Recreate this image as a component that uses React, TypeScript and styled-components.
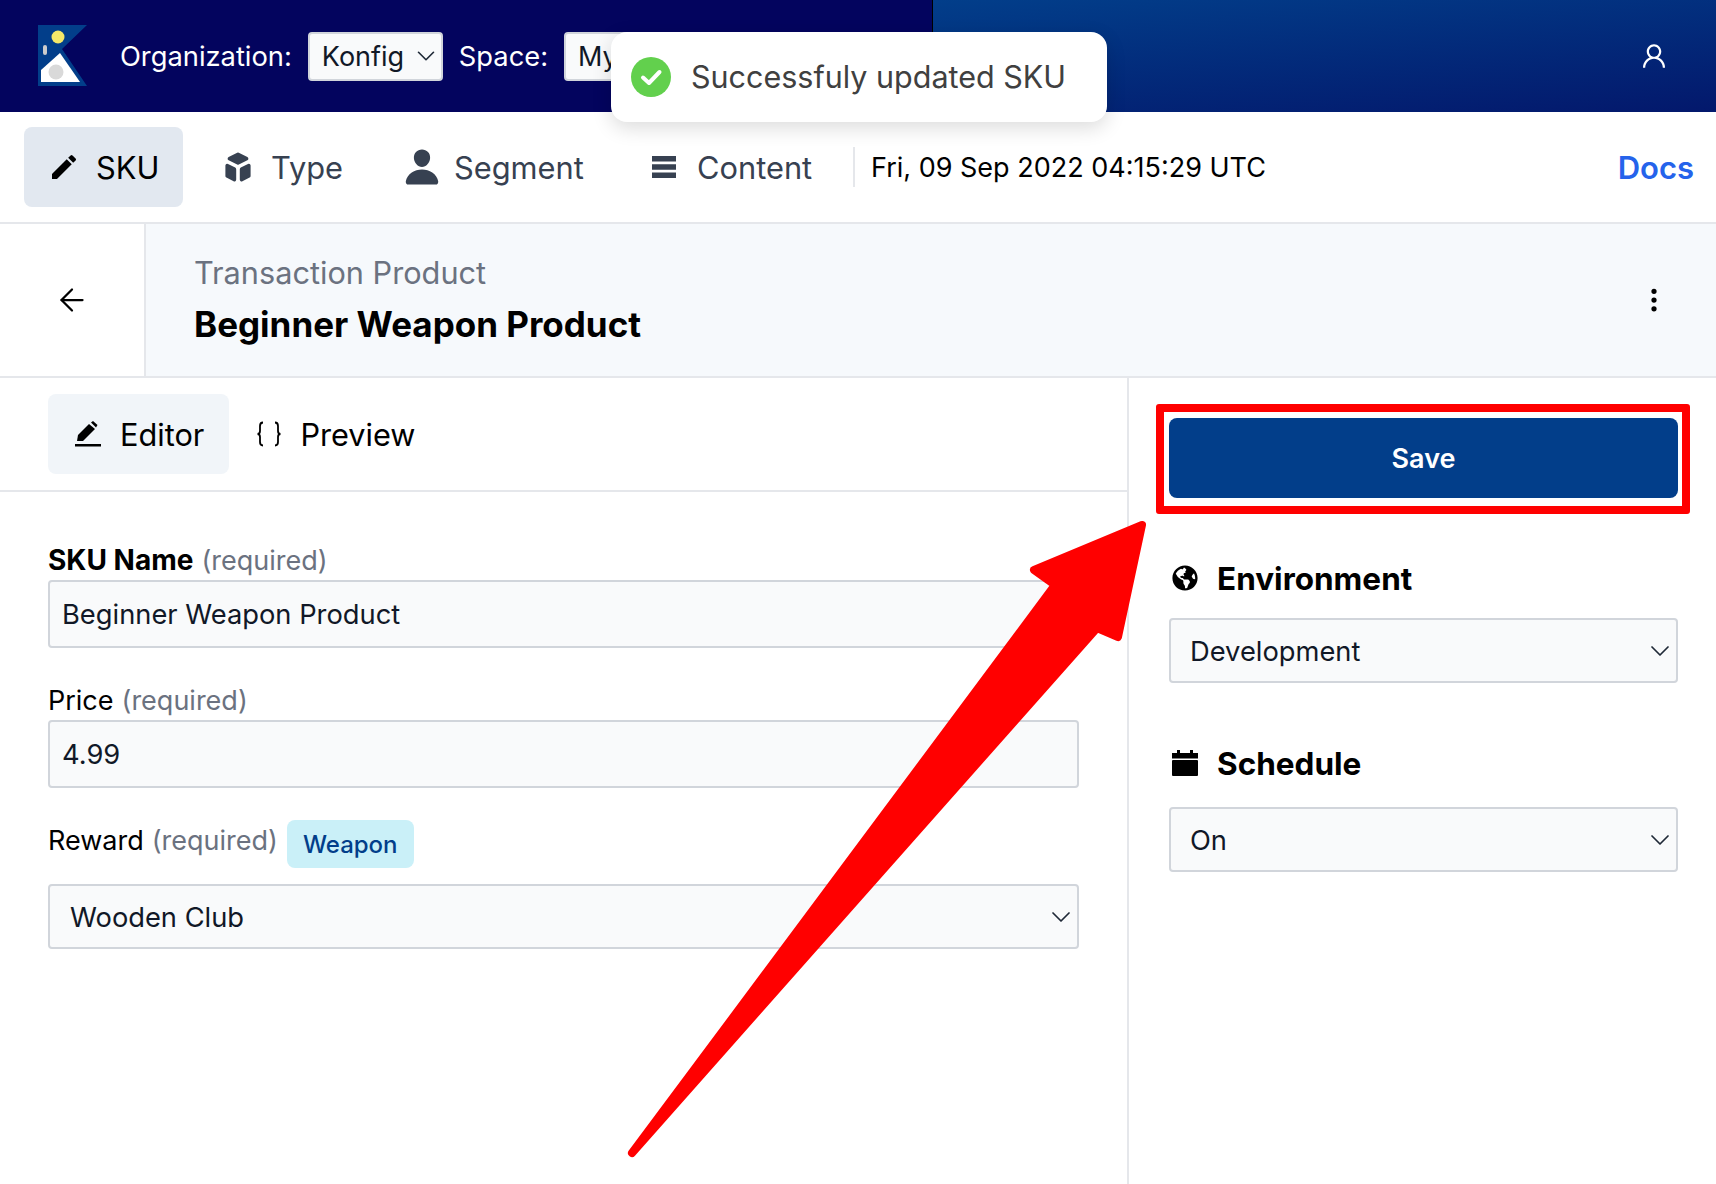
import React from "react";
import styled, { createGlobalStyle } from "styled-components";
import { MdEdit } from "react-icons/md";
import { HiCube } from "react-icons/hi";
import { IoPerson } from "react-icons/io5";
import { AiOutlineUser } from "react-icons/ai";
import { BsThreeDotsVertical } from "react-icons/bs";
import { FaGlobeAmericas } from "react-icons/fa";
import { ArrowLeft, ChevronDown } from "lucide-react";

const GlobalStyle = createGlobalStyle`
  html, body { margin: 0; padding: 0; background: #fff; }
  body { font-family: Inter, "Liberation Sans", sans-serif; font-size: 24px; color: #000; overflow: hidden; }
  * { box-sizing: border-box; }
`;

const Page = styled.div`
  position: relative;
  width: 1716px;
  height: 1184px;
  overflow: hidden;
`;

const Header = styled.header`
  display: flex;
  height: 112px;
`;

const HeaderLeft = styled.div`
  width: 933px;
  display: flex;
  align-items: center;
  padding-left: 38px;
  background: #03045e;
  border-right: 1px solid #000;
  color: #fff;
`;

const HeaderRight = styled.div`
  flex: 1;
  display: flex;
  align-items: center;
  justify-content: flex-end;
  padding-right: 47px;
  color: #fff;
  font-size: 30px;
  background: linear-gradient(175deg, #023e8a 0%, #03186c 100%);
`;

const Logo = styled.svg`
  width: 49px;
  height: 61px;
  margin-right: 33px;
  margin-top: -1px;
`;

const HeaderLabel = styled.span`
  font-size: 27.3px;
  margin-right: 16px;
`;

const HeaderSelect = styled.div<{ $width: number }>`
  width: ${(p) => p.$width}px;
  height: 49px;
  margin-right: 16px;
  padding: 0 0 0 12px;
  display: flex;
  align-items: center;
  justify-content: space-between;
  flex-shrink: 0;
  background: #f9fafb;
  border: 2px solid #d1d5db;
  border-radius: 4px;
  color: #111827;
  font-size: 27px;
`;

const Toast = styled.div`
  position: absolute;
  left: 611px;
  top: 32px;
  width: 496px;
  height: 90px;
  padding-left: 20px;
  display: flex;
  align-items: center;
  gap: 20px;
  background: #fff;
  border-radius: 16px;
  box-shadow: 0 6px 20px rgba(0, 0, 0, 0.14);
  color: #404040;
  font-size: 30.5px;
  z-index: 2;
`;

const ToastText = styled.span`
  margin-top: -2px;
`;

const NavBar = styled.nav`
  height: 112px;
  padding: 15px 22px 0 24px;
  display: flex;
  align-items: flex-start;
  border-bottom: 2px solid #e5e7eb;
`;

const NavItem = styled.div<{ $active?: boolean; $width: number; $pad: number }>`
  width: ${(p) => p.$width}px;
  height: 80px;
  padding-left: ${(p) => p.$pad}px;
  display: flex;
  align-items: center;
  flex-shrink: 0;
  background: ${(p) => (p.$active ? "#e2e8f0" : "transparent")};
  border-radius: 8px;
  color: ${(p) => (p.$active ? "#000" : "#374151")};
  font-size: 30.8px;
`;

const NavIcon = styled.span<{ $gap: number; $size: number }>`
  display: flex;
  margin-right: ${(p) => p.$gap}px;
  font-size: ${(p) => p.$size}px;
`;

const Bars = styled.svg`
  width: 24px;
  height: 22px;
`;

const NavDate = styled.div`
  height: 40px;
  margin-top: 20px;
  padding-left: 16px;
  display: flex;
  align-items: center;
  border-left: 2px solid #e5e7eb;
  font-size: 27px;
`;

const DocsLink = styled.a`
  margin: 22px 0 0 auto;
  color: #2563eb;
  font-size: 31px;
  font-weight: 600;
`;

const TitleBar = styled.div`
  height: 154px;
  display: flex;
  border-bottom: 2px solid #e5e7eb;
`;

const BackCell = styled.div`
  width: 146px;
  display: flex;
  align-items: center;
  justify-content: center;
  border-right: 2px solid #e5e7eb;
`;

const TitleCell = styled.div`
  flex: 1;
  display: flex;
  align-items: center;
  justify-content: space-between;
  padding: 0 48px 0 48px;
  background: #f6f9fc;
`;

const TitleKind = styled.div`
  color: #6b7280;
  font-size: 30.7px;
  line-height: 36px;
  margin-bottom: 12px;
`;

const TitleName = styled.div`
  font-size: 35px;
  font-weight: 700;
  line-height: 42px;
`;

const Body = styled.div`
  height: 808px;
  display: flex;
`;

const Editor = styled.main`
  width: 1129px;
  border-right: 2px solid #e5e7eb;
`;

const TabRow = styled.div`
  height: 114px;
  padding: 16px 48px 0;
  display: flex;
  align-items: flex-start;
  border-bottom: 2px solid #e5e7eb;
`;

const Tab = styled.div<{ $active?: boolean; $pad: number; $right: number }>`
  height: 80px;
  padding: 0 ${(p) => p.$right}px 0 ${(p) => p.$pad}px;
  display: flex;
  align-items: center;
  gap: 18px;
  flex-shrink: 0;
  background: ${(p) => (p.$active ? "#f1f5f9" : "transparent")};
  border-radius: 8px;
  font-size: 30.7px;

  svg {
    flex-shrink: 0;
  }
`;

const Form = styled.div`
  padding: 52px 48px 0 48px;
`;

const FieldLabel = styled.div`
  height: 36px;
  padding-bottom: 4px;
  display: flex;
  align-items: center;
  font-size: 27px;
`;

const FieldName = styled.strong`
  font-size: 28px;
  font-weight: 700;
`;

const Required = styled.span`
  margin-left: 8px;
  color: #6b7280;
  font-size: 27px;
  font-weight: 400;
`;

const Input = styled.div`
  height: 68px;
  margin-bottom: 36px;
  padding: 0 12px;
  display: flex;
  align-items: center;
  background: #f9fafb;
  border: 2px solid #d1d5db;
  border-radius: 4px;
  color: #111827;
  font-size: 27.3px;
`;

const Badge = styled.span`
  margin: 0 0 -8px 9px;
  padding: 0 16px;
  height: 48px;
  display: flex;
  align-items: center;
  background: #caf0f8;
  border-radius: 8px;
  color: #023e8a;
  font-size: 24px;
  font-weight: 500;
`;

const RewardLabel = styled(FieldLabel)`
  height: 48px;
  margin: -4px 0 16px;
  padding-bottom: 8px;
`;

const SelectBox = styled.div<{ $pad: number }>`
  height: 65px;
  padding: 0 0 0 ${(p) => p.$pad}px;
  display: flex;
  align-items: center;
  justify-content: space-between;
  background: #f9fafb;
  border: 2px solid #d1d5db;
  border-radius: 4px;
  color: #111827;
  font-size: 27.3px;
`;

const SelectValue = styled.span`
  margin-top: 2px;
`;

const Side = styled.aside`
  flex: 1;
  padding: 40px 38px 0 40px;
`;

const SaveButton = styled.button`
  display: block;
  width: 100%;
  height: 80px;
  margin-bottom: 60px;
  background: #023e8a;
  border: 0;
  border-radius: 8px;
  color: #fff;
  font-family: inherit;
  font-size: 27px;
  font-weight: 600;
`;

const SaveHighlight = styled.div`
  position: absolute;
  left: 1156px;
  top: 404px;
  width: 534px;
  height: 110px;
  border: 8px solid #ff0000;
  border-radius: 3px;
`;

const SideHeading = styled.div<{ $gap: number }>`
  height: 40px;
  margin-bottom: ${(p) => p.$gap}px;
  display: flex;
  align-items: center;
  gap: 19px;
  font-size: 31.5px;
  font-weight: 700;
`;

const SideIcon = styled.span`
  display: flex;
  margin-left: 3px;
  font-size: 26px;
`;

const SideGroup = styled.div`
  margin-bottom: 60px;
`;

const ArrowOverlay = styled.svg`
  position: absolute;
  left: 0;
  top: 0;
  width: 1716px;
  height: 1184px;
  pointer-events: none;
`;

const Chevron = ({ size = 32, weight = 1.3 }: { size?: number; weight?: number }) => (
  <ChevronDown size={size} strokeWidth={weight} color="#1f2937" />
);

const PenLine = () => (
  <svg width="28" height="28" viewBox="0 0 28 28" fill="currentColor">
    <path d="M3 21 L4 15 L15 4 L21 9 L10 20 L9 21 Z" />
    <path d="M17 2.5 L19 1 L23.5 5 L22 7.5 Z" />
    <rect x="1" y="24" width="26" height="2.5" />
  </svg>
);

const CurlyBraces = () => (
  <svg width="26" height="26" viewBox="0 0 26 26" fill="none" stroke="currentColor" strokeWidth="1.8">
    <path d="M7 1.5C4.5 1.5 4 2.5 4 5V10C4 12 3 13 1.5 13C3 13 4 14 4 16V21C4 23.5 4.5 24.5 7 24.5" />
    <path d="M19 1.5C21.5 1.5 22 2.5 22 5V10C22 12 23 13 24.5 13C23 13 22 14 22 16V21C22 23.5 21.5 24.5 19 24.5" />
  </svg>
);

const CalendarGlyph = () => (
  <svg width="26" height="26" viewBox="0 0 26 26" fill="currentColor">
    <rect x="5" y="0" width="3" height="5" />
    <rect x="18" y="0" width="3" height="5" />
    <rect x="0" y="3" width="26" height="5.5" />
    <rect x="0" y="10" width="26" height="16" rx="1" />
  </svg>
);

const App = () => {
  return (
    <Page>
      <GlobalStyle />
      <Header>
        <HeaderLeft>
          <Logo viewBox="0 0 49 61">
            <path d="M0 0H49L24 24L49 61H0Z" fill="#023e8a" />
            <path d="M22 28L42 57H3V45Z" fill="#fff" />
            <circle cx="20" cy="12" r="6.5" fill="#f4e869" />
            <circle cx="18" cy="47" r="7.5" fill="#d9d9d9" />
            <rect x="5" y="20" width="4" height="10" rx="2" fill="#ccc" />
          </Logo>
          <HeaderLabel>Organization:</HeaderLabel>
          <HeaderSelect $width={135}>
            Konfig <Chevron size={30} weight={1.3} />
          </HeaderSelect>
          <HeaderLabel>Space:</HeaderLabel>
          <HeaderSelect $width={200}>My</HeaderSelect>
        </HeaderLeft>
        <HeaderRight>
          <AiOutlineUser />
        </HeaderRight>
      </Header>

      <Toast>
        <svg width="40" height="40" viewBox="0 0 40 40">
          <circle cx="20" cy="20" r="20" fill="#62d04d" />
          <path d="M12 20.5L18 26L28.5 15" fill="none" stroke="#fff" strokeWidth="4" strokeLinecap="round" strokeLinejoin="round" />
        </svg>
        <ToastText>Successfuly updated SKU</ToastText>
      </Toast>

      <NavBar>
        <NavItem $active $width={159} $pad={24}>
          <NavIcon $gap={16} $size={32}>
            <MdEdit />
          </NavIcon>
          SKU
        </NavItem>
        <NavItem $width={182} $pad={37}>
          <NavIcon $gap={15} $size={36}>
            <HiCube />
          </NavIcon>
          Type
        </NavItem>
        <NavItem $width={242} $pad={37}>
          <NavIcon $gap={12} $size={40}>
            <IoPerson />
          </NavIcon>
          Segment
        </NavItem>
        <NavItem $width={246} $pad={45}>
          <NavIcon $gap={21} $size={24}>
            <Bars viewBox="0 0 24 22" fill="#374151">
              <rect width="24" height="5.5" />
              <rect y="8.25" width="24" height="5.5" />
              <rect y="16.5" width="24" height="5.5" />
            </Bars>
          </NavIcon>
          Content
        </NavItem>
        <NavDate>Fri, 09 Sep 2022 04:15:29 UTC</NavDate>
        <DocsLink>Docs</DocsLink>
      </NavBar>

      <TitleBar>
        <BackCell>
          <ArrowLeft size={36} strokeWidth={1.5} />
        </BackCell>
        <TitleCell>
          <div>
            <TitleKind>Transaction Product</TitleKind>
            <TitleName>Beginner Weapon Product</TitleName>
          </div>
          <BsThreeDotsVertical size={28} />
        </TitleCell>
      </TitleBar>

      <Body>
        <Editor>
          <TabRow>
            <Tab $active $pad={26} $right={25}>
              <PenLine />
              Editor
            </Tab>
            <Tab $pad={27} $right={24}>
              <CurlyBraces />
              Preview
            </Tab>
          </TabRow>
          <Form>
            <FieldLabel>
              <FieldName>SKU Name</FieldName>
              <Required>(required)</Required>
            </FieldLabel>
            <Input>Beginner Weapon Product</Input>
            <FieldLabel>
              Price <Required>(required)</Required>
            </FieldLabel>
            <Input>4.99</Input>
            <RewardLabel>
              Reward <Required>(required)</Required>
              <Badge>Weapon</Badge>
            </RewardLabel>
            <SelectBox $pad={20}>
              <SelectValue>Wooden Club</SelectValue>
              <Chevron />
            </SelectBox>
          </Form>
        </Editor>
        <Side>
          <SaveButton>Save</SaveButton>
          <SideGroup>
            <SideHeading $gap={20}>
              <SideIcon>
                <FaGlobeAmericas />
              </SideIcon>
              Environment
            </SideHeading>
            <SelectBox $pad={19}>
              <SelectValue>Development</SelectValue>
              <Chevron />
            </SelectBox>
          </SideGroup>
          <SideGroup>
            <SideHeading $gap={24}>
              <SideIcon>
                <CalendarGlyph />
              </SideIcon>
              Schedule
            </SideHeading>
            <SelectBox $pad={19}>
              <SelectValue>On</SelectValue>
              <Chevron />
            </SelectBox>
          </SideGroup>
        </Side>
      </Body>

      <SaveHighlight />
      <ArrowOverlay viewBox="0 0 1716 1184">
        <path
          d="M1142 525L1034 570L1055 585L632 1153L1097 628L1118 637Z"
          fill="#ff0000"
          stroke="#ff0000"
          strokeWidth="8"
          strokeLinejoin="round"
        />
      </ArrowOverlay>
    </Page>
  );
};

export default App;
